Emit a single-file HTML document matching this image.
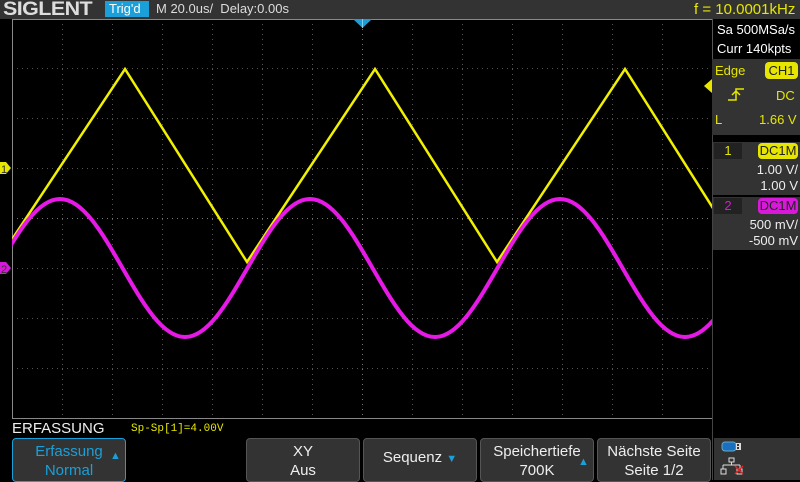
<!DOCTYPE html>
<html><head><meta charset="utf-8"><style>
*{margin:0;padding:0;box-sizing:border-box}
body{width:800px;height:480px;background:#000;overflow:hidden;position:relative;font-family:"Liberation Sans",sans-serif;color:#fff}
.abs{position:absolute}
.top{left:0;top:0;width:800px;height:19px;background:#333}
.btn{position:absolute;top:438px;height:44px;width:114px;background:#333;border:1px solid #555;border-radius:4px;text-align:center;font-size:15px;line-height:19px;padding-top:3px;color:#eee}
</style></head><body>
<div class="abs top"></div>
<div class="abs" style="left:3px;top:-1px;font-size:19px;font-weight:bold;letter-spacing:-0.5px;color:#ddd;transform:scaleX(1.13);transform-origin:left">SIGLENT</div>
<div class="abs" style="left:105px;top:1px;width:44px;height:16px;background:#1a9fd8;font-size:13px;line-height:16px;padding-left:4px">Trig'd</div>
<div class="abs" style="left:156px;top:1px;font-size:13px;line-height:16px;color:#ddd">M 20.0us/&nbsp; Delay:0.00s</div>
<div class="abs" style="left:694px;top:0px;font-size:15px;line-height:19px;color:#e6e600">f = 10.0001kHz</div>

<svg class="abs" style="left:0;top:0" width="800" height="480">
<defs><clipPath id="c"><rect x="12" y="19" width="700" height="399"/></clipPath></defs>
<g stroke="#555" stroke-width="1" stroke-dasharray="1 4">
<line x1="62.5" y1="19" x2="62.5" y2="418"/><line x1="112.5" y1="19" x2="112.5" y2="418"/><line x1="162.5" y1="19" x2="162.5" y2="418"/><line x1="212.5" y1="19" x2="212.5" y2="418"/><line x1="262.5" y1="19" x2="262.5" y2="418"/><line x1="312.5" y1="19" x2="312.5" y2="418"/><line x1="412.5" y1="19" x2="412.5" y2="418"/><line x1="462.5" y1="19" x2="462.5" y2="418"/><line x1="512.5" y1="19" x2="512.5" y2="418"/><line x1="562.5" y1="19" x2="562.5" y2="418"/><line x1="612.5" y1="19" x2="612.5" y2="418"/><line x1="662.5" y1="19" x2="662.5" y2="418"/>
<line x1="12" y1="68.5" x2="712" y2="68.5"/><line x1="12" y1="118.5" x2="712" y2="118.5"/><line x1="12" y1="168.5" x2="712" y2="168.5"/><line x1="12" y1="268.5" x2="712" y2="268.5"/><line x1="12" y1="318.5" x2="712" y2="318.5"/><line x1="12" y1="368.5" x2="712" y2="368.5"/>
</g>
<g stroke="#777" stroke-width="1" stroke-dasharray="1 4">
<line x1="362.5" y1="19" x2="362.5" y2="418"/><line x1="12" y1="218.5" x2="712" y2="218.5"/>
</g>
<rect x="12.5" y="19.5" width="700" height="399" fill="none" stroke="#888" stroke-width="1"/>
<g clip-path="url(#c)">
<path d="M-3 262 L125 69 L247 262 L375 69 L497 262 L625 69 L747 262" fill="none" stroke="#f0f000" stroke-width="2.5"/>
<path d="M-2.5 268 C18.4 231.8 37.5 199 60 199 S101.6 231.8 122.5 268 S162.5 337 185 337 S226.6 304.2 247.5 268 S287.5 199 310 199 S351.6 231.8 372.5 268 S412.5 337 435 337 S476.6 304.2 497.5 268 S537.5 199 560 199 S601.6 231.8 622.5 268 S662.5 337 685 337 S726.6 304.2 747.5 268" fill="none" stroke="#e619e6" stroke-width="4"/>
</g>
<polygon points="353,19 372,19 362.5,28" fill="#1a9fd8"/>
<line x1="362.5" y1="19" x2="362.5" y2="28" stroke="#7fd0f0"/>
<path d="M0 162 H6 L11 168 L6 174 H0Z" fill="#e6e600"/>
<text x="1" y="173" font-size="11" fill="#333" font-family="Liberation Sans">1</text>
<path d="M0 262 H6 L11 268 L6 274 H0Z" fill="#d919d9"/>
<text x="1" y="273" font-size="11" fill="#333" font-family="Liberation Sans">2</text>
<path d="M704 86 L712 79 V93 Z" fill="#e6e600"/>
</svg>

<div class="abs" style="left:712px;top:19px;width:88px;height:40px;background:#000;border-left:1px solid #555"></div>
<div class="abs" style="left:717px;top:20px;font-size:13px;line-height:19px;color:#fff">Sa 500MSa/s<br>Curr 140kpts</div>
<div class="abs" style="left:712px;top:59px;width:88px;height:76px;background:#333;color:#e6e600;font-size:13px">
 <div class="abs" style="left:3px;top:4px">Edge</div>
 <div class="abs" style="left:53px;top:3px;width:33px;height:17px;background:#e6e600;color:#222;border-radius:4px;text-align:center;line-height:17px">CH1</div>
 <svg class="abs" style="left:15px;top:27px" width="20" height="16"><path d="M1 14 H9 V3 H17 M5 9 L9 5 L13 9" fill="none" stroke="#e6e600" stroke-width="1.5"/></svg>
 <div class="abs" style="left:64px;top:29px">DC</div>
 <div class="abs" style="left:3px;top:53px">L</div>
 <div class="abs" style="left:47px;top:53px">1.66 V</div>
</div>
<div class="abs" style="left:712px;top:135px;width:88px;height:345px;background:#000;border-left:1px solid #444"></div>
<div class="abs" style="left:713px;top:142px;width:87px;height:53px;background:#333;font-size:13px">
 <div class="abs" style="left:1px;top:1px;width:28px;height:16px;background:#222;color:#e6e600;text-align:center;line-height:16px">1</div>
 <div class="abs" style="left:45px;top:1px;width:40px;height:16px;background:#e6e600;color:#222;border-radius:4px;text-align:center;line-height:16px">DC1M</div>
 <div class="abs" style="right:2px;top:20px;color:#eee;text-align:right;line-height:16px">1.00 V/<br>1.00 V</div>
</div>
<div class="abs" style="left:713px;top:197px;width:87px;height:53px;background:#333;font-size:13px">
 <div class="abs" style="left:1px;top:1px;width:28px;height:16px;background:#222;color:#d919d9;text-align:center;line-height:16px">2</div>
 <div class="abs" style="left:45px;top:1px;width:40px;height:16px;background:#d919d9;color:#222;border-radius:4px;text-align:center;line-height:16px">DC1M</div>
 <div class="abs" style="right:2px;top:20px;color:#eee;text-align:right;line-height:16px">500 mV/<br>-500 mV</div>
</div>

<div class="abs" style="left:12px;top:420px;font-size:15px;color:#eee">ERFASSUNG</div>
<div class="abs" style="left:131px;top:423px;font-size:11px;color:#e6e600;font-family:'Liberation Mono',monospace">Sp-Sp[1]=4.00V</div>
<div class="btn" style="left:12px;border-color:#1a9fd8;color:#1a9fd8">Erfassung<br>Normal<span class="abs" style="left:97px;top:8px;font-size:11px">▲</span></div>
<div class="btn" style="left:246px">XY<br>Aus</div>
<div class="btn" style="left:363px;line-height:38px;padding-top:0">Sequenz <span style="color:#1a9fd8;font-size:11px">▼</span></div>
<div class="btn" style="left:480px">Speichertiefe<br>700K<span class="abs" style="left:97px;top:14px;color:#1a9fd8;font-size:11px">▲</span></div>
<div class="btn" style="left:597px">Nächste Seite<br>Seite 1/2</div>
<div class="abs" style="left:714px;top:438px;width:86px;height:42px;background:#333"></div>
<svg class="abs" style="left:720px;top:440px" width="30" height="38">
<rect x="2" y="2" width="14" height="9" rx="3" fill="#1a6fc0" stroke="#6ab" stroke-width="1"/>
<rect x="16" y="3" width="5" height="7" fill="#ddd"/><rect x="17" y="4" width="2" height="2" fill="#333"/><rect x="17" y="7" width="2" height="2" fill="#333"/>
<rect x="9" y="18" width="5" height="4" fill="none" stroke="#ddd"/><path d="M11.5 22 V25 M3 25 H20 M3 25 V29 M20 25 V29" stroke="#ddd" fill="none"/>
<rect x="1" y="29" width="5" height="5" fill="none" stroke="#ddd"/><rect x="17" y="29" width="5" height="5" fill="none" stroke="#ddd"/>
<path d="M15 26 L23 34 M23 26 L15 34" stroke="#e22" stroke-width="1.5"/>
</svg>
</body></html>
